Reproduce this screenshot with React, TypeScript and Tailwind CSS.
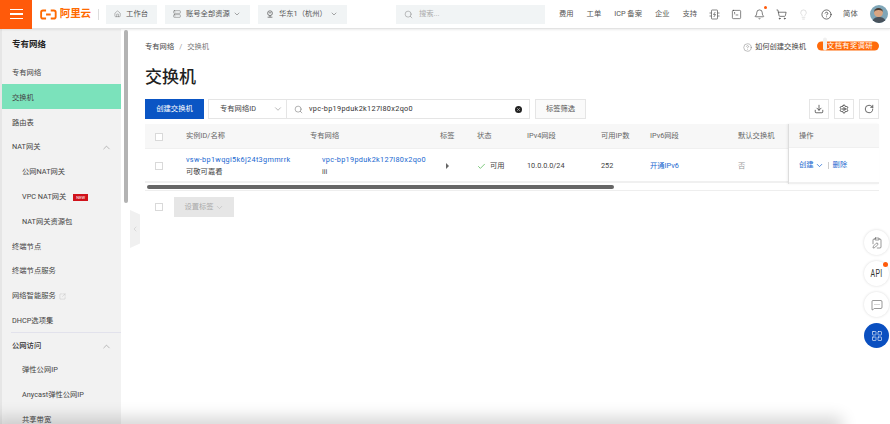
import React from "react";
import { ChevronDown, ChevronUp, ChevronLeft, Search, Home, Server, Bell, ShoppingCart, Lightbulb, CircleHelp, SquareTerminal, Download, Settings, RotateCw, Check, SquareArrowOutUpRight, X, ClipboardPen, MessageSquareMore, LayoutGrid } from "lucide-react";

const NavItem = ({ label, sub, bold, active, up, children }: { label: string; sub?: boolean; bold?: boolean; active?: boolean; up?: boolean; children?: React.ReactNode }) => (
  <div className={`h-[24.8px] shrink-0 flex items-center pt-[4px] pr-2 ${sub ? "pl-[20px]" : "pl-[10px]"} ${active ? "bg-[#7be2bb]" : ""} ${bold ? "font-medium text-[#333]" : ""}`}>
    <span className="whitespace-nowrap">{label}</span>
    {children}
    {up && <ChevronUp className="ml-auto mr-[1px] w-[11px] h-[11px] text-[#888]" strokeWidth={1.2} />}
  </div>
);

const Chip = ({ w, icon, label, chev }: { w: string; icon: React.ReactNode; label: string; chev?: boolean }) => (
  <div className={`${w} h-[19px] bg-[#f1f4f5] flex items-center pl-2 pr-[9px] text-[#555]`}>
    {icon}
    <span className="ml-[5px] whitespace-nowrap">{label}</span>
    {chev && <ChevronDown className="ml-auto w-[8px] h-[8px]" strokeWidth={1.5} />}
  </div>
);

const Box = () => <div className="w-[8px] h-[8px] bg-white border border-[#d9d9d9]" />;

const ToolBtn = ({ children }: { children: React.ReactNode }) => (
  <div className="w-[20px] h-[20px] border border-[#e5e5e5] flex items-center justify-center text-[#222]">{children}</div>
);

export default function App() {
  return (
    <div className="relative w-[890px] h-[424px] overflow-hidden bg-white text-[7.3px] text-[#444] flex flex-col" style={{ fontFamily: '"Roboto","Noto Sans CJK SC",sans-serif' }}>
      <header className="h-[29px] shrink-0 flex items-center border-b border-[#e3e3e3] shadow-[0_1px_2px_rgba(0,0,0,0.08)] z-10 bg-white">
        <div className="w-[32px] h-[29px] bg-[#ff5a0a] flex flex-col items-center justify-center gap-[3.5px]">
          <span className="w-[13px] h-[1.3px] bg-white" />
          <span className="w-[13px] h-[1.3px] bg-white" />
          <span className="w-[13px] h-[1.3px] bg-white" />
        </div>
        <div className="ml-[8px] w-[51px] flex items-center text-[#ff6a00]">
          <svg viewBox="0 0 18 11" className="w-[17px] h-[11px]" fill="none" stroke="#ff6a00" strokeWidth="2">
            <path d="M6.5 1.2H3.2Q1.2 1.2 1.2 3.2V7.8Q1.2 9.8 3.2 9.8H6.5M11.5 1.2H14.8Q16.8 1.2 16.8 3.2V7.8Q16.8 9.8 14.8 9.8H11.5M6.5 5.5H11.5" />
          </svg>
          <span className="ml-[3px] text-[10.5px] leading-none font-bold tracking-[-0.1px] whitespace-nowrap">阿里云</span>
        </div>
        <div className="ml-[7px] w-px h-[11px] bg-[#ddd]" />
        <div className="ml-[7px] flex items-center gap-2">
          <Chip w="w-[51px]" icon={<Home className="w-[8px] h-[8px]" strokeWidth={1.3} />} label="工作台" />
          <Chip w="w-[85px]" icon={<Server className="w-[8px] h-[8px]" strokeWidth={1.3} />} label="账号全部资源" chev />
          <Chip w="w-[89px]" icon={<svg viewBox="0 0 10 10" className="w-[8px] h-[8px]" fill="none" stroke="currentColor" strokeWidth="0.9"><circle cx="5" cy="4" r="3" /><path d="M2 9H8M5 7V9M3.5 3.5H6.5" /></svg>} label="华东1（杭州）" chev />
        </div>
        <div className="ml-[49px] w-[149px] h-[19px] bg-[#f1f4f5] flex items-center pl-2 text-[#aaa]">
          <Search className="w-[9px] h-[9px] text-[#777]" strokeWidth={1.2} />
          <span className="ml-[6px]">搜索...</span>
        </div>
        <nav className="ml-[14px] flex items-center text-[#555] whitespace-nowrap">
          <span>费用</span>
          <span className="ml-[13px]">工单</span>
          <span className="ml-[13px]">ICP 备案</span>
          <span className="ml-[13px]">企业</span>
          <span className="ml-[13px]">支持</span>
        </nav>
        <div className="ml-[12px] flex items-center gap-[11.3px] text-[#333]">
          <svg viewBox="0 0 11 11" className="w-[11px] h-[11px] text-[#555]" fill="none" stroke="currentColor" strokeWidth="0.7"><path d="M2.5 1.5Q2.5 1 3 1H8Q8.5 1 8.5 1.5V9.5Q8.5 10 8 10H3Q2.5 10 2.5 9.5ZM0.5 4H2.5M0.5 7H2.5M8.5 4H10.5M8.5 7H10.5M6.3 3L4.5 5.5H6.5L4.8 8" /></svg>
          <SquareTerminal className="w-[11px] h-[11px]" strokeWidth={1.3} />
          <div className="relative">
            <Bell className="w-[11px] h-[11px]" strokeWidth={1.4} />
            <span className="absolute -top-[3px] -right-[2px] w-[3px] h-[3px] rounded-full bg-[#ff5a0a]" />
          </div>
          <ShoppingCart className="w-[11px] h-[11px]" strokeWidth={1.4} />
          <Lightbulb className="w-[11px] h-[11px] text-[#bbb]" strokeWidth={1} />
          <CircleHelp className="w-[11px] h-[11px]" strokeWidth={1.5} />
        </div>
        <span className="ml-[11.5px] text-[#555]">简体</span>
        <div className="ml-[12px] w-[18px] h-[18px] rounded-full bg-[#7fa6b8] overflow-hidden flex flex-col items-center">
          <div className="mt-[3px] w-[9px] h-[10px] rounded-full bg-[#d9a582] border-t-2 border-[#4a3a30]" />
          <div className="w-[14px] h-[6px] rounded-t-full bg-[#48525c]" />
        </div>
      </header>

      <div className="flex-1 flex min-h-0">
        <aside className="w-[130px] shrink-0 flex overflow-hidden">
          <div className="w-[121px] shrink-0 bg-[#f2f2f2] border-l-2 border-[#e6e6e6] flex flex-col">
            <div className="h-[30px] shrink-0 flex items-center pl-[10px] text-[8.5px] font-bold text-[#222]">专有网络</div>
            <div className="flex flex-col">
              <NavItem label="专有网络" />
              <NavItem label="交换机" active />
              <NavItem label="路由表" />
              <NavItem label="NAT网关" up />
              <NavItem label="公网NAT网关" sub />
              <NavItem label="VPC NAT网关" sub>
                <span className="ml-[7px] h-[7px] px-[3px] bg-[#d0121b] text-white text-[4px] leading-[7px]">NEW</span>
              </NavItem>
              <NavItem label="NAT网关资源包" sub />
              <NavItem label="终端节点" />
              <NavItem label="终端节点服务" />
              <NavItem label="网络智能服务">
                <SquareArrowOutUpRight className="ml-[3px] w-[7px] h-[7px] text-[#aaa]" strokeWidth={1} />
              </NavItem>
              <NavItem label="DHCP选项集" />
              <div className="ml-[9px] h-px -mb-px bg-[#e2e2ec]" />
              <NavItem label="公网访问" bold up />
              <NavItem label="弹性公网IP" sub />
              <NavItem label="Anycast弹性公网IP" sub />
              <NavItem label="共享带宽" sub />
            </div>
          </div>
          <div className="w-[9px] shrink-0 pl-[3px] pt-[1px]">
            <div className="w-[4px] h-[173px] rounded-full bg-[#b3b3b3]" />
          </div>
        </aside>

        <main className="relative flex-1 min-w-0 pl-[15px] pr-[11px] flex flex-col">
          <div className="absolute left-0 top-[181px] w-[10px] h-[38px] bg-[#f0f0f0] flex items-center justify-center [clip-path:polygon(0_0,100%_12%,100%_88%,0_100%)]">
            <ChevronLeft className="w-[8px] h-[8px] text-[#aaa]" strokeWidth={1} />
          </div>

          <div className="h-[11px] mt-[13px] flex items-center whitespace-nowrap text-[#666]">
            <span className="text-[#444]">专有网络</span>
            <span className="mx-[5px] text-[#999]">/</span>
            <span className="text-[#777]">交换机</span>
            <CircleHelp className="ml-auto w-[9px] h-[9px] text-[#555]" strokeWidth={1} />
            <span className="ml-[3px] text-[#444]">如何创建交换机</span>
            <div className="ml-[11px] w-[62px] h-[9px] -translate-y-[1.5px] rounded-full bg-[#ff6a0a] text-white flex items-center pl-[10px] relative">
              <span className="absolute left-[6px] -top-[4px] w-[4px] h-[13px] bg-[#f0f0f0] rounded-full" />
              <span className="tracking-[0.35px]">文档有奖调研</span>
            </div>
          </div>

          <h1 className="mt-[13px] h-[22px] flex items-center text-[17px] font-medium text-[#222] leading-none">交换机</h1>

          <div className="mt-[11px] h-[20px] flex items-stretch">
            <div className="w-[59px] bg-[#0a55c4] text-white flex items-center justify-center">创建交换机</div>
            <div className="ml-[4px] w-[79px] border border-[#e5e5e5] flex items-center pl-[11px] pr-[3px] text-[#444]">
              专有网络ID
              <ChevronDown className="ml-auto w-[10px] h-[10px] text-[#555]" strokeWidth={1} />
            </div>
            <div className="w-[243px] border border-l-0 border-[#e5e5e5] flex items-center pl-[7px] pr-[7px] text-[#333]">
              <Search className="w-[9px] h-[9px] text-[#555]" strokeWidth={1.2} />
              <span className="ml-[6px] tracking-[0.32px]">vpc-bp19pduk2k127l80x2qo0</span>
              <span className="ml-auto w-[7px] h-[7px] rounded-full bg-[#222] flex items-center justify-center">
                <X className="w-[5px] h-[5px] text-white" strokeWidth={2} />
              </span>
            </div>
            <div className="ml-[5px] w-[51px] border border-[#e5e5e5] bg-[#fafafa] flex items-center justify-center text-[#555]">标签筛选</div>
            <div className="ml-auto flex gap-[5px]">
              <ToolBtn><Download className="w-[10px] h-[10px]" strokeWidth={1.6} /></ToolBtn>
              <ToolBtn><Settings className="w-[10px] h-[10px]" strokeWidth={1.8} /></ToolBtn>
              <ToolBtn><RotateCw className="w-[10px] h-[10px]" strokeWidth={1.6} /></ToolBtn>
            </div>
          </div>

          <div className="mt-[5px] relative">
            <div className="h-[23px] pt-[1px] bg-[#f7f7f7] flex items-center text-[#666] border-b border-[#f0f0f0] box-content">
              <div className="w-[41px] pl-[10px]"><Box /></div>
              <div className="w-[124px]">实例ID/名称</div>
              <div className="w-[130px]">专有网络</div>
              <div className="w-[37px]">标签</div>
              <div className="w-[50px]">状态</div>
              <div className="w-[74px]">IPv4网段</div>
              <div className="w-[49px]">可用IP数</div>
              <div className="w-[88px]">IPv6网段</div>
              <div className="w-[50px]">默认交换机</div>
            </div>
            <div className="h-[34px] pt-[2px] flex items-center border-b-2 border-[#f0f0f0]">
              <div className="w-[41px] pl-[10px]"><Box /></div>
              <div className="w-[136px] leading-[12px] whitespace-nowrap">
                <div className="text-[#2068d0] tracking-[0.32px]">vsw-bp1wqgi5k6j24t3gmmrrk</div>
                <div>可敬可嘉看</div>
              </div>
              <div className="w-[118px] leading-[12px] whitespace-nowrap">
                <div className="text-[#2068d0] tracking-[0.32px]">vpc-bp19pduk2k127l80x2qo0</div>
                <div>iii</div>
              </div>
              <div className="w-[37px] pl-[6px]">
                <div className="w-0 h-0 border-y-[3px] border-y-transparent border-l-[3.5px] border-l-[#666]" />
              </div>
              <div className="w-[50px] flex items-center">
                <Check className="w-[9px] h-[9px] text-[#3fae3f]" strokeWidth={1.8} />
                <span className="ml-[4px]">可用</span>
              </div>
              <div className="w-[74px]">10.0.0.0/24</div>
              <div className="w-[49px]">252</div>
              <div className="w-[88px] text-[#2068d0]">开通IPv6</div>
              <div className="w-[50px] text-[#999]">否</div>
            </div>
            <div className="absolute right-0 top-0 w-[91px] h-[60px] bg-white border-l border-[#ddd] shadow-[-1px_0_2px_rgba(0,0,0,0.06)] flex flex-col">
              <div className="h-[24px] pt-[1px] shrink-0 bg-[#f7f7f7] border-b border-[#f0f0f0] flex items-center pl-[10px] text-[#666]">操作</div>
              <div className="flex-1 flex items-center pt-[1px] pl-[10px] text-[#2068d0] border-b-2 border-[#f0f0f0]">
                创建
                <ChevronDown className="w-[9px] h-[9px] ml-[1px]" strokeWidth={2} />
                <span className="mx-[4px] w-px h-[7px] bg-[#ccc]" />
                删除
              </div>
            </div>
            <div className="h-[8px] border-b border-[#eee] flex items-center pl-[2px]">
              <div className="w-[467px] h-[4px] rounded-full bg-[#666]" />
            </div>
          </div>

          <div className="mt-[6px] flex items-center h-[20px] text-[#aaa]">
            <div className="pl-[10px] w-[29px]"><Box /></div>
            <div className="w-[60px] h-[20px] bg-[#e6e6e6] flex items-center justify-center">
              设置标签
              <ChevronDown className="w-[9px] h-[9px] ml-[1px]" strokeWidth={1.2} />
            </div>
          </div>
        </main>
      </div>

      <div className="absolute right-[1px] top-[230px] flex flex-col gap-[6px] items-center w-[25px]">
        <div className="w-[25px] h-[25px] rounded-full bg-white shadow-[0_0_3px_rgba(0,0,0,0.15)] flex items-center justify-center text-[#333]">
          <ClipboardPen className="w-[12px] h-[12px]" strokeWidth={1} />
        </div>
        <div className="relative w-[25px] h-[25px] rounded-full bg-white shadow-[0_0_3px_rgba(0,0,0,0.15)] flex items-center justify-center text-[#333]">
          <span className="text-[10px] scale-x-[0.7] tracking-[0.5px]">API</span>
          <span className="absolute top-[1px] right-[1px] w-[5px] h-[5px] rounded-full bg-[#ff5a0a]" />
        </div>
        <div className="w-[25px] h-[25px] rounded-full bg-white shadow-[0_0_3px_rgba(0,0,0,0.15)] flex items-center justify-center text-[#333]">
          <MessageSquareMore className="w-[12px] h-[12px]" strokeWidth={1} />
        </div>
        <div className="w-[25px] h-[25px] rounded-full bg-[#0a4fc0] flex items-center justify-center text-white">
          <LayoutGrid className="w-[12px] h-[12px]" strokeWidth={1.2} />
        </div>
      </div>

      <div className="absolute left-0 top-full w-[835px] h-[10px] shadow-[0_0_16px_7px_rgba(0,0,0,0.16)]" />
    </div>
  );
}
